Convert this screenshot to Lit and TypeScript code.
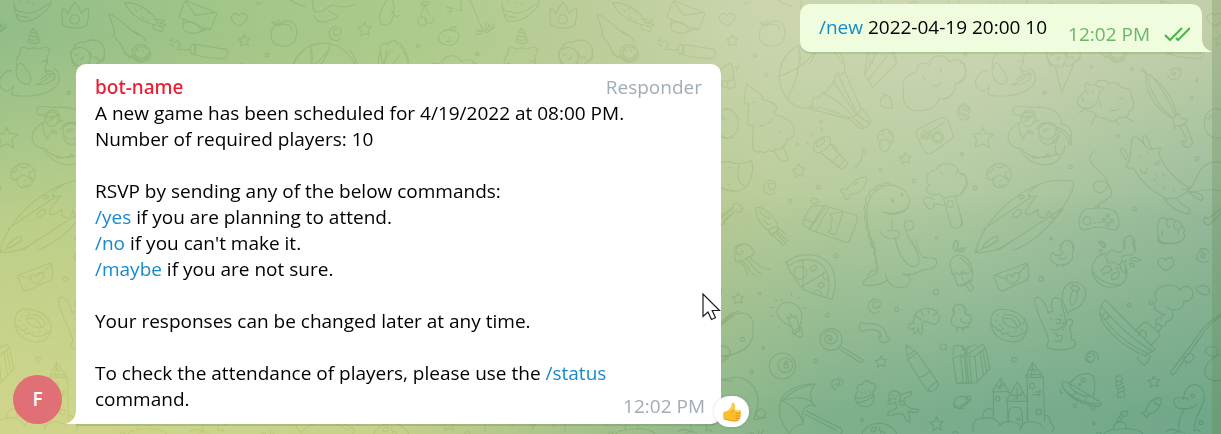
import { LitElement, html, css, svg } from "lit";
import { customElement, property } from "lit/decorators.js";

interface Sheet {
  x: number;
  y: number;
  strokes: string[];
  dots: number[][];
}

/* One repeat of the wallpaper, drawn at three times its size and grouped in sheets. */
const STAR =
  "l6 13 14 2 -10 10 4 15 -13 -6 -12 8 1 -15 -11 -9 14 -3z";
const STAR_SMALL =
  "l5 10 12 1 -8 9 3 12 -12 -5 -10 7 1 -12 -9 -8 12 -2z";
const SPIRAL =
  "c-8-5-14 3-11 10c4 10 19 8 22-3c3-14-14-22-26-14c-14 9-13 32 4 38c8 3 15 0 19-6";

const SHEETS: Sheet[] = [
  {
    x: 720,
    y: 50,
    strokes: [
      // pine tree
      "M80 103c-4 20-8 40-7 56c7 6 14 4 15 0c-3 20-6 45-4 64c5 6 11 6 16 3c-2 24-3 50-1 72c4 8 16 11 22 5c10 8 19 4 24-3c9 8 18 4 22-4c10 6 21 0 24-9c8-4 11-12 10-20c18 0 24-16 22-28c-2-20-26-38-52-43c-6-3-10-7-12-10c10 0 13-10 9-18c-8-10-24-16-42-20c2-5 1-10-2-12c-12-12-28-22-44-33z",
      "M98 159l10-4M118 227l14 0M142 221c8-4 13-9 16-15M178 240l2 8M160 296c7 14 15 28 24 38c8 0 18-3 22-10c-6-12-13-24-18-35",
      // parachute
      "M216 0c-30 24-42 62-36 96c8 50 46 84 88 78c6-2 12-6 10-12c-6-12 4-22 14-18c12 0 10-12 17-18c10 2 20-4 16-14c8-4 18-8 20-20c-2-12 4-24 14-22c4 4 12 2 14-4c5-24-4-48-20-66",
      "M236 0c6 50-8 100-34 146M286 4c-26 36-66 62-114 76M268 168c12 6 24 8 34 4M268 176l122 32M302 172l92 32M308 128c30 14 66 42 92 72M338 92c24 30 46 66 70 102M352 68c20 44 38 84 60 122M374 64l48 110M388 208c4-4 8-6 14-8c14-8 20-18 22-28M388 208l30 26c14 6 32-8 34-24l-28-38M398 202l36 32M410 192l40 30",
      // kite stripe
      "M443 4l-10 70l25 39l72-75l-16-34M433 74l40-70M444 92l58-76",
      // cloud
      "M552 122c-10-24 4-46 40-58c-2-24 12-30 36-20c4-30 44-38 60-8c24-18 56 2 50 38c-2 16-16 28-33 26c4 26-18 52-48 46c-6 24-30 36-60 36c-28 2-48-16-47-48c0-16-2-32 0-38M608 76l8 15M640 104c6 10 20 4 21-8M660 50l4 20",
      // leaf, swirl
      "M490 128c4 4 5 8 3 12c-14 2-16 22-6 30c8 6 22 2 31 6c-4-8-2-20-6-30c-4-10-14-12-20-6",
      "M738 178" + SPIRAL,
      "M156 402" + SPIRAL,
      // camera
      "M594 238l66-34c12-4 20 0 26 10l13 40c2 6 0 10-6 14l-56 40c-8 6-18 4-24-6l-22-42c-4-10-4-16 3-22zM600 266l74-50M636 262a17 17 0 1 0 34 0a17 17 0 1 0-34 0M641 262a12 12 0 1 0 24 0a12 12 0 1 0-24 0M604 254a14 14 0 1 0 28 0a14 14 0 1 0-28 0M611 254a7 7 0 1 0 14 0a7 7 0 1 0-14 0",
      // acorn
      "M474 272c-6-22 8-34 24-34c16 2 24 20 22 40c-14 0-12-12-24-10c-10 0-14 8-22 4zM480 274c-4 18 2 30 14 32c12-2 18-16 15-30M482 254c8 4 8-6 6-12M508 242c-4 6 2 12 10 10M501 270l1 2",
      // flashlight
      "M280 288c4-16 26-32 46-28c6 4 6 14 4 22c-10 16-26 26-42 26c-6-4-10-14-8-20zM290 290c-4-14 18-26 24-24c2 12-12 24-24 24zM300 306l58 48c8 8 24-6 24-16l-52-56M332 286c8-4 18 2 18 12M340 336c6-12 12-20 22-24M356 352c6-10 12-18 20-24M273 249l8 7M302 230l4 13M260 279l9 4M428 292c4 26-8 50-25 64M436 294l0 22",
      "M236 340" + STAR,
      "M556 308" + STAR_SMALL,
      // moon and a round fruit
      "M0 338c14-4 26-4 30-2c8 4 18 6 28 4c16-2 32-2 37-8c8 30-2 92-50 92c-18 0-32-6-45-14M58 346c-8 20-8 48 14 62M26 350l8 4M24 402l8 3M0 184c24-20 58 6 55 40c-2 34-34 50-55 34M0 207c8-2 14-1 16 4",
      // bell
      "M0 62c8-10 18-18 34-22c6 16 8 32 6 48c6 6 8 16 6 22c-16 8-32 4-46-4M0 92c14 2 30 2 40-4M4 96l2 10M22 96l2 12M48 50l2 10M56 46l0 8",
      // bone
      "M0 498l40-26c-4-14 14-16 18-8c12 4 12 20 2 22c-6 4-10 0-12-4l-36 28c6 10-4 18-12 12",
      // fish
      "M440 382c-20-4-48 14-60 38c-8-4-18-4-19 2c2 6 8 8 12 8c-4 10 2 20 8 18c8-2 10-10 10-16c26 2 50-20 49-50zM404 406c0-6 8-10 10-6",
      // squid
      "M108 474c10-6 32 4 48 24c14 16 20 30 18 42c-10 14-26 12-30 0c-24-16-38-42-36-66zM118 480c8 16 22 26 34 24M132 508c6 14 14 20 18 14M146 540c10-8 16-12 26-8M148 550c6 10 14 8 16 0M166 546l34 38M170 540l34 34M158 554l28 30M176 534l22 20",
      // snack pack
      "M274 448c2-6 20-2 22 6c-6 8-18 10-22 4zM290 468l22-2l96 30c6 4 6 8 4 14l-22 60c-4 10-12 8-16 6l-108-38l46-72M248 522c6-20 14-36 26-52l18-4M248 522l20 14M250 508l32 10M268 538l52-70M324 476l-36 66M330 492l38-6c-4 24-14 46-22 68c-8 0-18-4-22-10c12-4 12-10 8-20c-4-10 8-12 4-22z",
      // dinosaur
      "M468 600c-16-30-30-70-28-118c4-44 32-76 68-76c34 0 60 22 61 48c0 24-20 32-46 36c-14 0-24 0-36-4M520 492c20 2 34-8 45-20M500 488c4 6 10 8 14 0c4 10 14 8 16-2M517 508c-2 14-1 24 0 32M480 542c8 20 24 26 44 24c16-2 20-18 6-24c-10-2-20-1-26 2M552 508c2 34 12 62 38 92M526 562c2 14 4 28 10 38M556 518c10-10 26-6 25 6c0 14-14 22-22 14",
      "M460 592c-10-2-10-14-6-22c-12-4-12-20-6-26c-12-6-12-20-6-28c-12-6-10-20-4-26c-10-10-8-22 2-28c-8-12-2-24 8-24c-4-14 4-22 16-18c2-14 12-18 22-12c8-12 20-14 28-2c8-2 14-2 16 6M516 446a2 5 0 1 0 5 8zM544 428a2 5 0 1 0 5 8z",
      // broccoli
      "M630 406c-18-12-10-44 18-46c16-32 64-20 70 8c28 6 32 40 14 52c-6 14-20 22-36 18c-16 10-34 4-38-8c-20 12-40-2-38-12c0-8 4-10 10-12zM662 362c-2 6 2 10 8 12M712 358c0 6-2 12-6 16M670 446l24 84c8 8 26 6 34-8l-22-84M682 462a9 10 0 1 0 18 0a9 10 0 1 0-18 0M642 460l28 6M642 448c-10-10-34-8-32 6c0 6 4 10 10 10c-4 12 12 18 22 6c0-4 0-6-2-10",
      "M44 598c2-20 48-22 52 2M700 598c0-16 6-26 14-26c2 10-2 22-8 28M724 598l16-6",
    ],
    dots: [
      [105, 15, 5], [139, 74, 5], [303, 215, 4], [232, 283, 4], [295, 412, 6], [210, 453, 5],
      [481, 359, 4], [581, 393, 5], [726, 313, 5], [649, 563, 4], [736, 12, 4],
    ],
  },
  {
    x: 960,
    y: 50,
    strokes: [
      // bear on a lily leaf
      "M84 62c-24 0-40 22-37 40c2 12 12 20 24 22l18-14l-6 24c50 12 126 0 141-38c4-20-2-36-16-40M98 44c-2-10-4-20 10-30M104 42c-14 14-10 48 14 58c16 8 24-4 22-18c-2-16-18-22-20-34c-4-8-14-10-16-6zM176 36c8-6 14-6 14 4c-8 8-10 22-2 30M188 62c12 0 20 2 18 10c-12-2-28 8-36 18M156 104c16-4 40-22 52-34c10 0 4 8 0 10c10 2 4 10-6 12c-10 10-28 14-46 12",
      "M108 14c-4-22 12-28 24-16c10-6 26-6 36 0c10-12 32-8 28 10c-4 8-6 10-8 10c2 8 4 14 2 20",
      // ice cream
      "M286 50l19 76l36-82M262 0c-4 30 10 50 30 46c6 12 18 6 22-6c8 14 24 8 28-4c14-2 22-20 18-36",
      // sheep
      "M376 176c-20-6-30-16-20-32c8-12 16-16 22-22c-4-10-2-24 4-25c6 4 6 8 8 10c12-6 22-2 26 6c8-6 14-4 14 2c-2 6-8 10-12 8c2 30-16 54-42 53zM408 100c8-14 34-10 38 2c16-8 34-2 38 12c24-2 34 14 30 30c14 16 4 36-8 42c2 16-20 20-28 14c-10 18-30 18-38 4c-20 4-34-4-38-18c-14 0-24-6-26-14M376 176l-18 12M408 192l-14 32M470 212l6 14M496 200l24 16M380 126l4 3M398 124l0 6M364 146c4 4 8 2 6-2M368 154l4 2M418 156l6 12M452 180c10 4 18 2 26-4M478 142l10 6",
      // closed umbrella
      "M544 62c-2-4 6-6 8-2l8 12c44 20 78 70 90 120l-14 12c-48-24-80-78-78-126c0-2 2-4 2-6zM564 82c8 44 32 86 68 116M570 74c28 28 58 76 74 118M638 204l18-14l8 16c8 2 16-2 18 0c2 6-2 10-6 8c-2 8-8 12-12 12c-10 0-18-2-20 8c-2 6-2 6 0-2zM660 228l18 36c4 10-2 18-12 8c-2 12 8 22 20 20c12-4 14-16 8-28l-18-42",
      "M642 72c-4-6 2-8 4-2c0 8-10 6-14-2c-4-12 14-18 24-10c12 12 6 28-14 30c-10 0-18-6-20-16M20 176c-8-2-8 8 0 8c8-2 8-18-4-22c-20-4-26 20-14 32c8 6 16 8 26 8M660 50l4 12",
      // rims cut by the bubble
      "M420 8c6 8 14 10 22 12M446 14c4 14 18 22 32 20c14-2 22-12 21-26M452 10c2 10 12 16 22 14c10 0 16-6 16-14",
      // pilot bird
      "M222 190c-4 16-36 12-44 4c-22 4-22-10-16-22c10-6 36 0 44 0c32-2 56 0 70 8c20 8 28 24 30 44c14 0 26 8 28 22c0 14-4 24-4 36M182 218c-20 4-38 26-38 46c2 22 24 32 40 32c20 30 76 34 110 14M180 300c30 48 90 60 122 22M176 218c0 14 4 40 14 44M186 208a18 22 0 1 0 36 0a18 22 0 1 0-36 0M181 206a24 27 0 1 1 46 12M236 244a26 24 0 1 0 52 0a26 24 0 1 0-52 0M230 240c6-24 38-30 56-14c14 14 10 42-10 50M226 218c-4-6 6-8 12-4M288 230c20 6 34 18 44 36l4 22M286 236c20 8 30 18 38 34l4 14M196 206l14-10M196 214l18-14M250 240l10-4M248 248l22-10M188 270c10-20 12-28 28-20c-4-2-10 0-16-6c10-8 22 2 16 8M302 254c-16 16-22 48-10 60c14 4 20-6 22-26M216 322c14 6 36 0 50-10M260 320c6 2 8-4 0-10M238 262c8 20 26 28 46 14",
      "M68 232l8 18l26 3l-19 15l6 25l-20-12l-24 11l5-23l-11-17l21-1z",
      // mushroom
      "M82 382c-6-22 12-42 38-42c24 2 38 24 33 46c-6 8-12 2-18-2c-10-10-24-10-34 0c-8 8-16 8-19-2zM82 366c14 2 18-6 14-18M104 344c6 12 24 12 30 0M150 362c-18 4-18 14-6 24M100 386c-4 16 4 26 20 27c16 0 26-10 26-26M118 404c6 4 12 4 16 0M122 390l0 3",
      // rocket
      "M48 600c20-76 96-160 186-196c32-12 72-16 104-10c8 10-2 34-18 60c-50 84-110 130-160 146M72 536l140-94c-10-4-8-14 0-20c12-10 20-14 28-20M206 434c14 8 20 8 26 2c-14 14-48 56-30 58c10 2 22-10 32-16c-4 20 8 28 20 24c10-4 8-14 14-20c4 14 6 28 16 22c8-4 14-16 24-26M116 600l192-126M158 496c4-12 16-20 26-16c4 10-14 26-24 22zM176 442c4-6 16-8 18-4c0 6-16 12-18 4zM68 592c2-10 30-34 44-32c6 8-24 30-44 34z",
      // gamepad
      "M402 304c-28 20-4 44 20 64c22 18 28 40 12 54c-12 12-32 4-34-12c2-18 26-22 42-10c14 14 18 38 4 44c-16 10-32 16-32 26M406 474c2-8 8-8 12-2M374 480c22-8 64-8 86 0c18 16 20 44 12 54c-10 10-16 6-24 2c-20-6-44-6-62 0c-10 6-18 4-24-2c-10-14-4-42 12-54zM369 512a12 12 0 1 0 24 0a12 12 0 1 0-24 0M439 497a5 5 0 1 0 10 0a5 5 0 1 0-10 0M427 511a5 5 0 1 0 10 0a5 5 0 1 0-10 0M450 513a5 5 0 1 0 10 0a5 5 0 1 0-10 0M438 523a5 5 0 1 0 10 0a5 5 0 1 0-10 0M402 519l5 0M415 517l5 0",
      // flying cat
      "M522 356c-8-6-18 4-25-6c10-14 16-26 14-42l6-44c10-12 24 6 36 20c6 8 10 12 16 14l34-4c-4 6-4 14-8 20M560 292c-10-12-16-26-8-36c10 0 16 22 22 38M500 330c-10-12-22-22-16-36c8 0 16 14 20 28M522 358c24 40 60 70 98 88c14 0 24-2 30-2c14-8 24-12 34-22c30-26 24-64 58-80c14-8 30-8 41-4M598 316c14 34 50 78 88 96M666 416c10 4 18 2 22-4M612 446c14 20 38 38 68 46c14 2 12-16 0-20c-14-8-24-18-32-28M684 422c10 14 22 22 40 30c8-6 2-20-10-22c-10-2-18-2-24-6M684 430c20-6 56-16 99-8M584 336c4 12 12 12 12-4M540 358c6 14 18 20 22-2M536 316l6 8M560 304l4 6M588 372l4 8M610 372l4 8M582 386l4 8M610 410l4 8M640 418l4 6M554 366l4 6",
      // fist and bone
      "M598 508c-8 24-6 48 4 66c16 10 50 8 62-2c12-6 12-16 6-22c6-10 2-18-4-22c-2-14-12-18-20-14c-8-10-18-10-24-4c-10-10-22-6-24-2zM622 512c-4 10 0 18 8 20M646 514c-8 10-4 20 2 26M666 530c-12 4-14 14-10 22M606 542l0 14M592 566c2 14 14 18 24 14M783 478l-40 28c-8-10-16 2-10 8c4 14 16 14 22 2l28-26",
      // tops of the figures below
      "M300 600c6-36 38-38 40 0M416 576c6-6 20 0 20 10c-6 8-10 4-12-2zM496 596c2-8 0-12-6-16c-2-14 14-26 26-20c10 10-6 22 10 40M722 600c6-6 14-6 20 0M0 376c24-16 26 24 0 60M0 490c6 10 8 24 2 40M0 36c20 10 22 36 0 58",
      // egg at the edge
      "M706 94l6-8l0 14M783 180c-22-12-46 4-50 32c-2 40 26 60 50 50M736 202l10 6l4-14l8 10",
    ],
    dots: [
      [254, 128, 5], [394, 51, 4], [517, 57, 5], [474, 259, 5], [332, 351, 5], [46, 413, 6],
      [6, 313, 5], [695, 144, 5], [711, 325, 6], [523, 476, 6], [274, 566, 4], [16, 12, 5],
    ],
  },
  {
    x: 720,
    y: 240,
    strokes: [
      // jellyfish
      "M46 56c-10-26 14-50 36-42c14 6 20 16 20 28c-8 8-14 10-22 10c-4 10-14 12-20 8c-8 10-18 6-14-4zM50 34a9 9 0 1 0 16-4M60 60c4 14 14 18 16 26c4 10 8 12 8 20M68 62c8 10 16 16 20 26c4 12 10 12 18 18M80 54c6 14 12 16 20 26c6 12 14 18 26 22M90 52c8 12 12 12 20 20c10 8 18 16 40 16M56 58l0 14M96 44l6-2",
      // pizza
      "M198 68c38-32 102-34 132 6c20 28 20 70 6 104c-30-8-62-18-88-32c-20-24-38-48-50-78zM196 66c10 10 14 12 22 4c36-20 78-12 96 14c16 28 16 60 6 90M250 60l-2 84M248 138l64-38M222 98a18 18 0 1 0 38 0a18 18 0 1 0-38 0M318 96c-14 0-16 18 4 24M280 158c4-10 20-12 26 8M272 88c-2-10 4-14 10-10c4-6 10 0 6 4c2 8-4 10-8 8c-2 6-8 4-8-2zM296 134c0-8 8-10 12-4c8 2 6 10 0 10c-2 8-10 4-8 0c-4 0-8-2-4-6z",
      // dinosaur feet
      "M456 0c6 34 18 54 16 98c-10 10-26 12-38 22c-8 10-2 18 8 16c20 0 40 0 60-16M526 0c8 30 20 60 40 74c20 14 36 2 30-22c-4-14-10-24-20-52M496 100c4 20 14 40 40 42c30 2 44-20 30-32c-6-6-10-8-18-10M550 104c14 2 40-2 56-14c24-2 44-4 44-24c0-20-30-8-42-16c-8-6-14-20-20-50M464 4c-8 2-12 8-8 18c8 4 8 12 4 18c8 6 8 16 6 26c6 8 8 16 2 22M466 92c-10-2-20 6-24 18",
      // melting popsicle
      "M706 36c-8-10-10-22 0-34c12 8 10 26 0 34zM714 34c4-10 10-14 20-4c-4 6-12 8-20 4zM692 82c-6-24 10-38 28-36c24 2 34 26 38 50M692 82l22 56c20 2 30-10 42-18M694 88c0 22 10 20 16 8c8 14 16 10 18-2c8 10 14 6 20 2M726 112l4 10",
      // bulb
      "M216 262c-28-16-50-30-44-54c4-18 24-22 38-20c30 4 44 34 30 68l-2 16l-18 12c-4-6-2-14-4-22zM216 262l-16-32l12 6l0-14l12 12l4-8l10 40M220 272l26-10M220 282l26-14l2 14c2 6-6 12-12 8zM166 178l7 4M182 178l4 4M214 160l0 8M234 175l6-5M247 204l10 2M150 202l10 0M153 226l8 2M175 264l2-4",
      "M54 158" + STAR_SMALL,
      "M483 348" + STAR_SMALL,
      "M650 530" + STAR,
      "M470 188" + SPIRAL,
      "M354 430c-8-2-8 8 0 8c8-4 8-18-4-20c-18-4-20 24-2 32M354 414c12 0 18 10 12 22",
      // lollipop
      "M300 298a33 33 0 1 0 66 0a33 33 0 1 0-66 0M332 296c-8-6-10 4-2 6c10-4 8-18-6-16c-14 4-12 24 6 26c18 0 26-16 20-28c-10-16-32-14-38 0M360 318l64 38c10 6 2 14-6 10l-64-42",
      // billiard ball
      "M148 378a38 38 0 1 0 78 0a38 38 0 1 0-78 0M174 376a22 22 0 1 0 44 0a22 22 0 1 0-44 0M194 368a5 5 0 1 0 10 0a5 5 0 1 0-10 0M192 378a6 6 0 1 0 13 0a6 6 0 1 0-13 0",
      // rainbow
      "M420 266c-8-16 10-22 20-14c30-8 58 12 60 38c14 2 10 16 0 14c-2 8-18 4-22-4c-6-14 2-12 6-10c-2-16-16-24-40-20c-6-2-10 0-12 4c-6 4-10 2-12-8z",
      // shrimp
      "M580 244c2-28 24-42 50-38c28 6 34 28 22 42c-14 10-22 2-28-2c-10-6-18 2-18 14c4 10 0 20-4 24c-8-6-4-16-8-22c0 12-4 18-12 18c-4-8 0-14 2-18c-8 8-16 8-20 0c2-10 8-14 18-12zM586 228l18 12M602 212l8 16M624 206l2 16M650 218l-10 10",
      // chick
      "M704 222c-10-12-6-28 12-28c16 0 22 12 18 26c6 8 12 6 20 0M704 222c-8 8-12 20-8 30c6 10 24 14 54 10M704 206l-8 4l8 4M716 206l1 3M722 236c0 14 14 14 28 12M710 264l0 10M728 264l2 10",
      // crayon
      "M558 314l32 24c22 32 46 62 66 94c-2 16-16 22-32 22c-24-32-42-62-62-96zM560 324l6-4M564 346l20-14M566 356l26-18M596 412c14-2 28-12 36-24M624 454l4-12l22-18",
      // gift
      "M700 344l0-18c2-12 20-14 30-2c6 6 8 12 10 20M698 354l24-8l28-4M698 354l12 76l40 0M722 350l8 80M738 346l8 84M736 340c-2-16 4-20 14-20",
      // cupcake in a pot
      "M414 454c-8-10 0-24 14-20c2-16 20-14 26-2c14-6 18 14 4 24c8 16 4 38-14 44c-20 2-40-8-38-30c0-8 4-12 8-16zM406 474c20 4 40-4 54-14M410 488c20-2 38-8 52-22M424 456l2 4M436 456l2 4M448 454l2 4",
      // gingerbread man
      "M540 470c6-16 22-8 34-16c4 10-10 18-20 20c-8 16 12 36 42 34c2 10-18 14-30 4c0 10 4 20 4 34c-10 4-14-14-22-24c-8-2-18 0-28 2c-14 10-20-2-14-8c8-6 16-6 24-12c0-8-4-10-2-18c-8 2-12 8-20 6c-10-6 0-12 6-14M512 486c-12-16-4-34 14-34c16 4 20 20 12 32M516 466l4 0M530 464l2 3M518 474c4 4 8 4 10 0M540 490a6 6 0 1 0 13 0a6 6 0 1 0-13 0",
      // umbrella
      "M182 484c4-26 50-52 104-52c-16 18-20 40-4 62c-16-2-32 8-36 26c4 12 4 22 4 32c-18 0-32 10-42 28c-24-28-36-60-26-96zM186 482c40-16 80-8 96 10M188 484c36 14 54 40 62 66M186 482c20-20 54-42 98-50M258 512l98 50c16 6 12 16 6 20M254 522l94 48M278 494a5 5 0 1 0 10 0",
      // planet
      "M704 490c-2-14 8-22 22-20c12 0 20 6 24 14M704 490c4 16 16 20 30 14M704 484c-10 20-2 30 48-4",
      // guitar and its cable
      "M0 250c14-16 36-32 54-36M4 252c20-18 50-38 72-32c34 12 28 74 8 98c-20 22-50 28-82 32M0 320c20-6 34 8 28 24c-4 16-16 20-28 26M62 298a6 6 0 1 0 12 0a6 6 0 1 0-12 0M0 420c16 0 30-10 56-8c36 6 56 38 58 66c2 24-10 46-12 60c8 4 20-2 34-14c6-14-18-24-26-8c-6 16 12 22 28 16",
      // beetle
      "M426 582c14-40 84-46 104 0M454 568c4-8 12-8 16-4c-2 8-10 14-16 12zM478 562l4 16M482 578c4-6 8-6 12 2M90 576l10 4M114 570l2 10M130 572l-6 8M698 578c4-4 10-6 16 2",
      "M176 0l14 16M360 0c6 8 20 10 30 4",
    ],
    dots: [
      [349, 47, 6], [119, 160, 4], [648, 156, 8], [530, 208, 6], [322, 225, 6], [130, 324, 4],
      [95, 396, 5], [287, 363, 5], [670, 321, 9], [426, 540, 4], [0, 152, 4],
    ],
  },
  {
    x: 960,
    y: 240,
    strokes: [
      // rocket base, chick
      "M50 24l-4 14c30 2 80-8 112-38M46 36c10-4 38-14 70-34M278 38c-6 4-8 14-6 20c6 14 24 20 44 16c18-6 26-24 20-34c8-10 6-26 0-34c-8-8-22-6-28 2c-8 8-8 20 0 30c-8 12-22 10-30 0zM336 18l6 2l-6 5M296 52c6 10 22 6 26-6M290 74l1 7M310 76l-1 6M322 14l2 2",
      // fish bowl
      "M436 40c-30 4-44 38-38 62c10 34 50 48 82 34c26-14 26-54 8-72M438 52c6 4 2 12 6 16c8 6 12-4 20 0c6 6 14 10 20 0c4-8 0-14 2-20c8 2 14-6 18-4c10 4 22-4 22-18c0-10-8-14 0-26M434 50c10-8 12-18 22-20c12 0 16 12 26 6c16-8 4-16 14-34M414 4c8-2 22 6 22 18c-8 2-12-2-12-10c-4 0-8-2-10-8zM418 32a4 4 0 1 0 8 0a4 4 0 1 0-8 0M400 96c10 20 40 40 82 38M422 90l8-2c4-14 20-14 26 2c-8 8-16 10-22 8l-2 8zM466 84c10-4 12 10 2 14c-10 0-18 8-12 20c14 4 24-10 22-22M480 76c0 10 4 16 16 24l2-26M508 60c8-10 20-10 34 0c-12 6-22 6-34 0zM508 72c8-4 14-2 16 6c-8 6-12 0-16-6M492 66c4-8 8-6 8 2",
      // heart, spiral, dish, bean
      "M618 92c-14-6-30-20-22-34c8-8 18-4 20 4c6-12 22-12 25 0c2 12-12 24-23 30zM730 44c-8-2-10 8-2 10c10 0 12-16-2-18c-18-2-20 22-8 28c8 6 22 4 28-2M746 36c-6-12-20-14-30-6M594 0c18 16 56 14 74 0M712 152c-6-4-4-10 6-14c16-4 30 2 30 14c2 14-14 14-20 10c-6-2-12 0-16-10z",
      // envelope
      "M102 106l96-36c4-2 6 0 6 4l2 34c0 6-4 12-10 14l-66 30c-8 2-12 0-16-8l-12-32c-2-4-2-4 0-6zM104 106l38 12M176 100l26-28M158 132c-18-8-22-16-18-24c6-6 14-4 18 2c4-14 18-16 20-6c4 10-6 20-20 28z",
      // popsicle side
      "M0 54c20 8 40 42 38 56c-4 14-22 20-38 26M2 96c2 6 8 10 10 2M18 100l2 4M14 132l14 20c8 4 12-6 10-12l-12-20M0 32c8 0 12-4 14-6M0 192c14 4 22 14 16 30c12 0 20 14 18 22c-4 12-20 22-34 20M10 264l0 8",
      // donut
      "M96 226c-12 34 6 62 34 74c30 12 62 6 70-26c8-28-16-54-48-62c-26-8-48-6-56 14zM128 232c6-14 34-10 48 8c10 14 2 26-12 24c-20-2-40-16-36-32zM132 236c16-6 34 4 40 26M90 252c8 0 10 4 8 8c6 0 12 4 12 10c10-2 14 6 16 12c8-4 18-4 20 4c8 6 12 4 18 2c14 4 18-6 22-8c8 0 14-6 16-10M112 224l3 3M106 240l3 4M118 254l4 0M130 216l4 0M146 276l6 2M164 276l5-2M184 268l4 2M188 252l4-4M176 224l4 2M192 240l2-4M126 264l4 4",
      // rabbit with a carrot
      "M240 236c-4-20-20-44-16-58c4-12 18-6 24 4c8 12 14 24 16 36c6-2 10-4 14-4c-6-20-6-40 10-42c16 0 18 14 20 32c4 12 8 24 8 36c4 18-4 24-10 30M270 268c16 6 40 0 42-24M240 236c10 22 24 44 26 68c-6 8-6 16-2 20c20 8 60 8 78-4c8-8 6-22-8-20c0-12 0-24-6-38c14-8 12-24 2-24c-10 0-12 8-12 16M272 236l4 4M300 226l6 0M288 236c4 4 10 2 14 0c0 8-2 16-8 16M288 250l14 0M280 280c6-4 10 0 10 8c2 4 4-4 14-2c10 6-2 24-20 16M322 220l-6-20c-16-24-10-60 14-72c26-8 48 10 47 36c-4 24-16 38-38 44zM336 196c-10-4-8-26 2-44c10-2 16 4 14 14c-4 18-10 28-16 30zM340 150c-12-4-10-10-4-10c-2-8 6-6 8 0c4-6 12-4 8 4c10-2 10 6 0 8",
      // boat and smoke
      "M436 180c50 52 100 100 150 148l-30 20c-56-22-130-78-138-130c0-14 8-26 18-38zM422 196c50 62 100 104 154 138M418 216c38 60 94 104 146 124M428 228a9 9 0 1 0 18 0a9 9 0 1 0-18 0M526 274l20-22c4-6 12-6 18-2l32 28c4 4 4 10 0 14l-24 26M536 288c2-16 8-20 16-16c8 4 10 10 4 22M534 350c-4 10 6 16 20 26c8-8 14-16 16-30M584 262l10-12l12 10l-10 14M588 250c-2-16 10-18 16-14c-2-10 6-12 12-12c-24-4-44-24-26-44c-14-18 0-40 30-44c22-4 36 4 38 16c16-24 44-10 40 14c-4 20-20 16-28 18c6 10-10 28-26 26c-14 0-20-6-22-10M600 256c18 4 20-4 18-12c20-4 24-14 18-28M682 184c-4 0-6-2-6-4",
      // fishing rod
      "M783 222c-40 24-58 44-76 74l-76 102c2 6 8 8 12 4l78-110c20-32 34-44 62-64M676 348c-8 8-4 18 8 20c14-2 20-14 16-22c-6-8-14-8-18-4M680 362l-2 14M736 338c-4-22 36-26 38-4c0 10-6 16-14 16c-12-2-20-8-24-12M778 344c-26 10-50 36-42 60c8 18 30 22 47 16",
      // gift side
      "M0 352l44-4l32-24c4 10 8 40 14 62l-40 42l-50 2M44 348l8 78M14 354l6 74M28 352l6 74M60 338l10 64M68 330l12 62M0 316c14 0 16 14 14 30M10 320c-8 8 8 14 12 22c14-4 24-20 44-28c8 2 10 8 8 10M20 340c0-16 14-28 30-24",
      // castle
      "M196 412l22-46l32 46zM96 456l26-42l24 40zM138 484l34-58l32 58zM100 458l0 74M146 456l4 4M202 412l0 126M250 412l4 130M202 486l2 56M142 486l2 60M208 390l24 0M214 376l12 20M204 404l40 0M218 372l-4 38M108 438l28 0M122 424l-2 22M114 446l14-14M152 466l36 0M172 446l0 34M160 478l26-20M146 548l0-32c4-20 40-20 40 4l2 34M208 438a8 8 0 1 0 16 0a8 8 0 1 0-16 0M228 516a8 8 0 1 0 16 0a8 8 0 1 0-16 0M106 476a7 7 0 1 0 14 0a7 7 0 1 0-14 0M172 538a4 4 0 1 0 8 0a4 4 0 1 0-8 0M226 456l20 0M218 464l22 0M240 450l-4 20M42 576c-10-20 4-44 26-40c-2-18 8-30 20-30c8 0 12 10 12 14M68 536c20-8 44 0 52 20c14-18 50-14 62 4c14-22 56-18 66 2M186 560l-6 10M254 526c14 0 20 12 16 22c14 6 12 20 6 28",
      // spiral
      "M392 352c-6-6-14 2-8 10c10 10 24-2 20-14c-6-14-24-10-27 2c-4 14 10 20 20 16M378 346c8-18 38-20 38 16",
      // ufo
      "M306 432c-4-8 10-8 22-2c32 20 60 34 88 54c10 8 6 14 0 16c-40-2-100-26-110-68zM328 430c4 20 36 44 72 38c6-24 8-52-6-64c-30-12-50 12-66 26zM308 442c24 30 64 48 108 50M338 466l10-8M374 486l6-10M360 480c-6 4-6-6-6-8M304 448c-6 4-4 14 4 10M342 490c-4 8-2 14 4 14l4-14M392 500c2 8 4 12 10 10l2-10M364 420a6 6 0 1 0 12 0a6 6 0 1 0-12 0M356 434a3 3 0 1 0 6 0a3 3 0 1 0-6 0",
      // candy
      "M470 422c-8-8-2-16 4-12c4-6 14-2 10 4c8 4 2 8-2 10c8 12 12 22 8 34c6 2 8 10 2 12c-4 6-10 0-12 0c-6 6-12 0-6-8c-2-4 2-6 2-6c-6-10-10-22-6-34zM470 426l14-4M470 438l20-8M472 448l20-8M476 458l14-6",
      "M582 408" + STAR_SMALL,
      // fish, bomb
      "M604 474c-18-6-44 14-46 42c-8-2-14 2-12 6c6 0 10 2 12 10c6-2 8-8 8-12c22 0 38-20 38-46zM582 482c2 10 8 14 18 12M592 478l1 2M430 582c20-20 106-22 118 0M460 566c0-26 38-28 40 0M472 544c2-12 8-16 12-22M480 544c2-8 6-10 8-14M482 518c4-4 14-4 20-4c4 6-2 14-8 16c-6-2-10-6-12-12zM410 580c4-6 12-4 14 0",
      // lake monster
      "M668 474c-14-2-28-2-26 14c4 18 22 20 34 18c-20 22-22 50-18 70M668 478c6-20 14-44 36-44c24 2 34 24 26 52c-8 24-30 56-28 88M668 478c4-8 14-6 16 2M692 466c2-6 10-4 12 2c0 6-6 6-10 2zM666 504c20 4 36 0 42-12M656 484l2 2M618 574c10-8 30-8 36 0M702 572c8-4 16-4 18 4M644 578c10-6 20-4 30 0",
      "M0 468c14 4 24 0 30 0c6 8-4 20-16 28l-14 8M18 472c8 12 0 24-8 26",
    ],
    dots: [
      [244, 117, 7], [507, 195, 5], [573, 188, 5], [162, 359, 7], [401, 550, 4], [723, 548, 6],
    ],
  },
  {
    x: 976,
    y: 0,
    strokes: [
      // burger
      "M42 6c0 10 0 14 4 20c-4 6-2 16 4 16c-2 14 6 22 18 22c30 2 62-20 82-46c4-8 4-12 2-18M44 26c14 6 10 14 22 8c12 4 14 8 22 4c10 4 20-8 30-8c10-4 16-18 30-18M50 42c12 14 24 6 36 10M60 4l3 2M84 6l4 2M98 14l4-2",
      // crown
      "M188 76c-2-18-4-40 0-52c8 0 10 8 16 18c6-12 12-26 22-36c8 10 14 22 18 34c6-6 14-16 20-16c6 14 0 34-4 52c-20 12-52 10-72 0zM210 58a14 14 0 1 0 28 0a14 14 0 1 0-28 0",
      // carrot
      "M374 8c32-2 76 18 98 58c0 8-6 10-12 8c-40-8-72-36-86-66zM406 26l4 8M426 20l-4 8M424 48l6 8M440 60l4 6M444 34l4 6M462 58c10-2 22 4 32 4c-6 6-10 8-18 6c10 4 20 4 22 8c-6 6-14 2-22 0c6 6 16 8 14 14c-4 8-14 4-18-2c-10 8-14 0-12-14",
      // comet
      "M326 42c20 0 70 54 90 64c-2-4-8-6-14-12c12 6 32 18 36 30M326 42c6 18 14 36 18 54c-2 8-4 8-2 12c10 14 16 20 24 30c0 8 10 20 16 28c6 4 8 6 8 12M396 160a27 27 0 1 0 54 0a27 27 0 1 0-54 0M404 160a18 18 0 1 0 40 0M404 160c0-20 30-26 36-14M410 150l5 4M428 148l4 6",
      // envelope with a letter
      "M560 2l88 36c4 2 4 4 2 6l-18 42c-2 4-6 4-10 2l-82-34c-4-2-4-4-2-8l14-36c2-6 4-8 8-8zM558 6l28 40l58-8M550 62c-2 12 0 30 4 32c12 2 20 8 26 6c14-2 32-8 42-16M552 70c20-12 42 0 48 18M600 88c14-2 24-2 34-4",
      // heart, star, peach
      "M718 78c-16-6-30-20-22-32c6-8 16-6 20 2c6-12 22-10 25 2c2 12-10 20-23 28z",
      "M733 104" + STAR_SMALL,
      "M1094 66" + STAR,
      "M836 74c-22 4-26 26-20 46c8 20 50 26 66 6c14-20 10-54-8-62c-16-4-28 2-38 10c-8-8-14-10-22-6c8 8 14 8 22 6zM834 70c4-6 4-8 2-10M836 78c14-10 38-6 40 14",
      // firecracker
      "M578 132l100 16c8 8 6 20-4 28c-32 0-68-6-100-14M578 132c-10 4-10 26-2 30c10-2 12-28 2-30zM568 148c-14 8-16-4-28 2c-8 0-8-6-2-10c8-12-6-20-14-14M508 120l6 4M516 116l2 6M510 134l6-2M518 140l2-6M590 136c-4 8-6 18-2 28",
      // candy corn, ice cream
      "M98 86c10 2 20 28 20 40c-8 6-24 6-34-2c2-14 8-26 14-38zM94 96l16 4M88 106l26 6M86 118c8 4 18 4 30 0M228 200c-16-12-20-42-6-56c4-16 20-20 32-16c22-18 62-4 60 30c0 16-4 26-12 28c-8-2-8-14-14-16c-4 0-6 6-10 4c-6-4-4-18-10-16M218 150c16-14 48-10 52 18c2 12-4 24-10 30M224 162c4 6 8 6 12-2M242 178c6 0 8-4 8-10",
      "M1012 90" + SPIRAL,
      // figures cut by the top edge
      "M870 0c20 10 30 18 46 18M940 0c-4 20-2 40 20 36c20-4 20-20 38-20c18 4 40 10 70-4M942 46c4 14 14 26 40 18c16-8 26-4 30-14c-2-8-20-14-26-18M1160 0c-12 24-28 40-20 66c6 14 30 10 34-2c10-18 10-40 4-64M1174 30c6 16 14 24 26 16M768 6c4 8 14 8 20 0M1140 138c10-14 24-6 24-4c8-16 26-14 30 0M1140 138l6 50M1160 150l-6 40M0 70l10 20l8-18M0 88l6 4",
      // beach ball top
      "M880 192c16-38 46-60 84-62c40-4 80 20 100 62M932 134c4 20 6 40 4 58M990 132c-2 20-12 40-26 60",
    ],
    dots: [[801, 165, 5], [206, 278, 5]],
  },
  {
    x: 888,
    y: 0,
    strokes: [
      // cherries
      "M54 64a13 13 0 1 0 26 0a13 13 0 1 0-26 0M76 52a13 13 0 1 0 22-4M62 50c2-16 8-26 14-36M88 42c-8-8-12-18-12-28M62 14c8-12 16-10 26-8c-4 10-14 12-26 8z",
      // palm leaves
      "M140 22l20 4M142 32l14 2M150 38l6-6M166 28l18 6l-2-34M210 0l40 96M250 96c-8-4-14-4-22 0M228 86l22 10l-8-18M254 96l4-30M256 96l14-24M260 98l24-16M228 104l16-4",
      // strawberry
      "M148 88c-18 0-32 14-32 30c2 12 20 20 36 18c18-4 26-20 24-36c-8-8-14-10-28-12zM150 88c4-8 12-10 18-8c-2 8-8 12-18 12M132 106l2 4M146 112l3 4M140 124c6 2 10 0 12-4M0 130c14 14 22 34 26 54M0 142l14 6",
    ],
    dots: [[54, 137, 5], [232, 161, 5]],
  },
];

@customElement("chat-wallpaper")
export class ChatWallpaper extends LitElement {
  static styles = css`
    :host {
      display: block;
      overflow: hidden;
      background: linear-gradient(90deg, #92bd89 0, #a2c589 18%, #accb8c 34%, #bccd9a 48%, #cad5ae 62%, #cdd6b2 80%, #c0cea9 100%);
    }
    .middle,
    .bottom,
    .doodles {
      position: absolute;
      inset: 0;
      width: 100%;
      height: 100%;
    }
    .middle {
      background: linear-gradient(90deg, #b9ce8a 0, #c2d28b 30%, #b9cb94 58%, #b8cc9b 64%, #afc9a0 78%, #96ba9a 100%);
      mask-image: linear-gradient(transparent 8%, #000 50%);
    }
    .bottom {
      background: linear-gradient(90deg, #cfd58a 0, #c9d28a 30%, #b3c78b 42%, #91b88b 58%, #7fb08c 68%, #78ac8d 82%, #70a788 100%);
      mask-image: linear-gradient(transparent 45%, #000 95%);
    }
    .doodles {
      mix-blend-mode: soft-light;
      opacity: 0.29;
    }
  `;

  render() {
    const sheets = SHEETS.map(
      (s) => svg`<g transform="translate(${s.x} ${s.y}) scale(0.33333)">
        ${s.strokes.map((d) => svg`<path d=${d}></path>`)}
        ${s.dots.map(([x, y, r]) => svg`<circle cx=${x} cy=${y} r=${r}></circle>`)}
      </g>`,
    );
    return html`
      <div class="middle"></div>
      <div class="bottom"></div>
      <svg class="doodles" aria-hidden="true" fill="none" stroke="#000" stroke-width="3.4" stroke-linecap="round" stroke-linejoin="round">
        <g id="tile">${sheets}</g>
        <use href="#tile" x="-488"></use>
        <use href="#tile" x="-976"></use>
      </svg>
    `;
  }
}

@customElement("chat-command")
export class ChatCommand extends LitElement {
  @property() name = "";

  static styles = css`
    a {
      color: #168acd;
      text-decoration: none;
    }
  `;

  render() {
    return html`<a href="#${this.name}">/${this.name}</a>`;
  }
}

@customElement("app-root")
export class AppRoot extends LitElement {
  static styles = css`
    :host {
      display: block;
      position: relative;
      box-sizing: border-box;
      min-height: 100vh;
      overflow: hidden;
      font: 19px/26px "Open Sans", "Noto Sans", sans-serif;
      color: #000;
    }
    chat-wallpaper {
      position: absolute;
      inset: 0;
    }
    .scrollbar {
      position: absolute;
      inset: 0 0 0 auto;
      width: 9px;
      background: rgb(90 130 70 / 0.24);
    }
    .log {
      position: relative;
      display: flex;
      flex-direction: column;
      gap: 12px;
      padding: 4px 19px 10px 13px;
    }
    .bubble {
      position: relative;
      box-sizing: border-box;
      border-radius: 10px;
    }
    .tail {
      position: absolute;
      bottom: 0;
      width: 10px;
      height: 14px;
    }
    .out {
      align-self: flex-end;
      display: flex;
      gap: 21px;
      padding: 10px 12px 12px 19px;
      border-bottom-right-radius: 0;
      background: #effdde;
      box-shadow: 0 2px 0 rgb(110 170 90 / 0.3);
    }
    .out .tail {
      left: 100%;
      fill: #effdde;
    }
    .status {
      display: flex;
      align-items: center;
      gap: 14px;
      height: 26px;
      margin-top: 7px;
      margin-bottom: -7px;
      color: #6cb566;
    }
    .ticks {
      width: 26px;
      height: 14px;
      fill: none;
      stroke: #4fb44f;
      stroke-width: 2.2;
    }
    .row {
      display: flex;
      align-items: flex-end;
      gap: 14px;
    }
    .avatar {
      flex: none;
      width: 49px;
      height: 49px;
      border-radius: 50%;
      background: #e17076;
      color: #fff;
      font-weight: 600;
      line-height: 49px;
      text-align: center;
    }
    .in {
      max-width: 645px;
      flex: 1;
      padding: 10px 19px 5px;
      border-bottom-left-radius: 0;
      background: #fff;
      box-shadow: 0 2px 0 rgb(100 140 90 / 0.3);
    }
    .in .tail {
      right: 100%;
      fill: #fff;
    }
    .head {
      display: flex;
      justify-content: space-between;
    }
    .author {
      color: #ee1c2e;
      font-family: "Noto Sans", "Open Sans", sans-serif;
      font-weight: 500;
    }
    .muted {
      color: #a0acb6;
    }
    .text {
      margin: 0;
      white-space: pre-line;
    }
    .time {
      margin-top: -19px;
      margin-right: -3px;
      text-align: right;
    }
    .reaction {
      position: absolute;
      right: -28px;
      bottom: -3px;
      display: flex;
      align-items: center;
      justify-content: center;
      width: 35px;
      height: 31px;
      padding: 0;
      border: 0;
      border-radius: 16px;
      background: #fff;
      box-shadow: 0 0 3px rgb(0 0 0 / 0.16);
    }
    .reaction svg {
      width: 20px;
      height: 20px;
    }
    .cursor {
      position: absolute;
      left: 702px;
      top: 293px;
      width: 19px;
      height: 28px;
    }
  `;

  render() {
    return html`
      <chat-wallpaper></chat-wallpaper>
      <div class="scrollbar"></div>
      <main class="log">
        <article class="bubble out">
          <span><chat-command name="new"></chat-command> 2022-04-19 20:00 10</span>
          <span class="status">
            <time>12:02 PM</time>
            <svg class="ticks" viewBox="0 0 26 14" aria-label="Read">
              <path d="M1 8l5 5L18 1M12 11l2 2L26 1"></path>
            </svg>
          </span>
          <svg class="tail" viewBox="0 0 10 14" aria-hidden="true"><path d="M0 0c0 7 3 11 10 14H0z"></path></svg>
        </article>
        <div class="row">
          <div class="avatar">F</div>
          <article class="bubble in">
            <header class="head">
              <span class="author">bot-name</span>
              <span class="muted">Responder</span>
            </header>
            <p class="text">A new game has been scheduled for 4/19/2022 at 08:00 PM.
Number of required players: 10

RSVP by sending any of the below commands:
<chat-command name="yes"></chat-command> if you are planning to attend.
<chat-command name="no"></chat-command> if you can't make it.
<chat-command name="maybe"></chat-command> if you are not sure.

Your responses can be changed later at any time.

To check the attendance of players, please use the <chat-command name="status"></chat-command> command.</p>
            <div class="time muted"><time>12:02 PM</time></div>
            <svg class="tail" viewBox="0 0 10 14" aria-hidden="true"><path d="M10 0c0 7-3 11-10 14H10z"></path></svg>
            <button class="reaction" aria-label="Thumbs up">
              <svg viewBox="0 0 20 20" aria-hidden="true">
                <path fill="#fdbf2d" d="M1.400 10.500c1-1.300 3.300-1 5.100-2.200C8.600 6.800 9.500 4.200 9.700 2c.1-1.600 2.300-1.700 2.900 0 .6 1.800.2 4.300-.3 6.200h5c2 0 2.300 2.300.9 2.900 1.300.8 1.100 2.500-.1 2.900.8.9.4 2.300-.7 2.600.4 1.300-.4 2.300-1.900 2.500-2.600.3-5.900.3-8.300-.6-1.900-.7-3.400-.3-4.900-1C.8 16 .6 12.400 1.400 10.500z"></path>
                <path fill="none" stroke="#e98b1c" stroke-width="0.900" stroke-linecap="round" d="M12.300 8.200c-1.500.4-2.400 1.300-2.400 2.400M18.200 11.100h-4.500M18.100 14h-4.500M17.400 16.600h-3.600M2 17c1.800.8 3.500.4 5.200 1.200 2.500.8 5.500.8 8 .5"></path>
                <path fill="none" stroke="#ffd95c" stroke-width="1" stroke-linecap="round" d="M11 2.200c.1 2.600-.6 5-2.300 6.600M13.500 9.500h3.500"></path>
              </svg>
            </button>
          </article>
        </div>
      </main>
      <svg class="cursor" viewBox="0 0 19 28" aria-hidden="true">
        <path fill="#fff" stroke="#1c1c28" stroke-width="1.200" d="M1 1v22.500l5-4.500 3.500 7.500 4-1.800-3.300-7.200H17.500z"></path>
      </svg>
    `;
  }
}
